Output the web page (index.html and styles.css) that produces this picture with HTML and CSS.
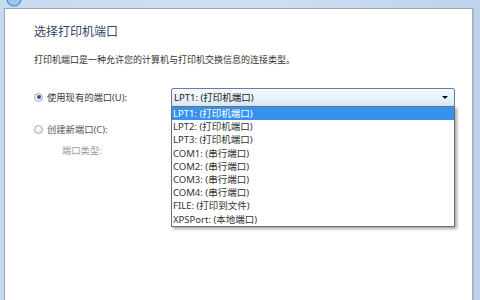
FILE: index.html
```html
<!DOCTYPE html>
<html lang="zh-CN">
<head>
<meta charset="utf-8">
<title>选择打印机端口</title>
<link rel="stylesheet" href="styles.css">
</head>
<body>
<div class="frame">
  <svg class="back-btn" width="20" height="12" viewBox="0 0 20 12">
    <circle cx="10" cy="2" r="7" fill="#9cc8ea" stroke="#4f86bf" stroke-width="1.2"/>
  </svg>
  <div class="client">
    <h1 class="title">选择打印机端口</h1>
    <p class="desc">打印机端口是一种允许您的计算机与打印机交换信息的连接类型。</p>
    <div class="options">
      <div class="row row-first">
        <span class="radio checked"></span>
        <span class="label">使用现有的端口(U):</span>
        <div class="combo">
          <div class="combo-box">
            <span class="combo-text">LPT1: (打印机端口)</span>
            <span class="combo-arrow"></span>
          </div>
          <ul class="dropdown">
            <li class="item selected">LPT1: (打印机端口)</li>
            <li class="item">LPT2: (打印机端口)</li>
            <li class="item">LPT3: (打印机端口)</li>
            <li class="item">COM1: (串行端口)</li>
            <li class="item">COM2: (串行端口)</li>
            <li class="item">COM3: (串行端口)</li>
            <li class="item">COM4: (串行端口)</li>
            <li class="item">FILE: (打印到文件)</li>
            <li class="item">XPSPort: (本地端口)</li>
          </ul>
        </div>
      </div>
      <div class="row row-second">
        <span class="radio"></span>
        <span class="label label-second">创建新端口(C):</span>
      </div>
      <div class="row row-third">
        <span class="label disabled">端口类型:</span>
      </div>
    </div>
  </div>
</div>
</body>
</html>
```
FILE: styles.css
```css
* { box-sizing: border-box; }
html, body { margin: 0; padding: 0; }
body {
  width: 480px;
  height: 300px;
  overflow: hidden;
  font-family: "Noto Sans", "Noto Sans CJK SC", sans-serif;
  font-size: 9px;
  color: #333;
}
.frame {
  position: relative;
  height: 300px;
  background: linear-gradient(90deg, #c6daef 0%, #cfe0f2 50%, #bdd3eb 100%);
  padding: 8px 6px 0 4px;
  display: flex;
}
.back-btn {
  position: absolute;
  left: 4px;
  top: -3px;
}
.client {
  flex: 1;
  background: #fff;
  border: 1px solid #98a6b6;
  border-right: 2px solid #a8b4c2;
  border-bottom: none;
  padding: 15px 0 0 29px;
}
.title {
  margin: 0;
  font-size: 12px;
  line-height: 16px;
  font-weight: normal;
  color: #34466a;
}
.desc {
  margin: 14px 0 0;
  line-height: 12px;
  color: #333;
}
.options { margin-top: 22px; }
.row {
  display: flex;
  align-items: center;
}
.row-first { height: 19px; }
.row-second { height: 14px; margin-top: 16px; }
.row-third { height: 14px; margin-top: 7px; padding-left: 28px; }
.radio {
  width: 9px;
  height: 9px;
  border-radius: 50%;
  border: 1px solid #a3aebb;
  background: radial-gradient(circle at 40% 40%, #ffffff 0%, #e6e8eb 70%, #d4d8dd 100%);
  position: relative;
  flex: 0 0 auto;
  margin-top: -1px;
}
.radio.checked::after {
  content: "";
  position: absolute;
  left: 1.5px;
  top: 1.5px;
  width: 4px;
  height: 4px;
  border-radius: 50%;
  background: #355a8e;
}
.label {
  width: 128px;
  padding-left: 4px;
  line-height: 12px;
  flex: 0 0 auto;
  color: #3a3a3a;
  font-size: 9.3px;
}
.label-second { color: #555; }
.label.disabled {
  padding-left: 0;
  color: #9a9a9a;
}
.combo {
  position: relative;
  width: 284px;
  height: 19px;
}
.combo-box {
  height: 19px;
  border: 1px solid #5f7fa8;
  border-radius: 2px;
  background: linear-gradient(#f6f9fd 0%, #eaf2fa 50%, #d9e7f5 100%);
  display: flex;
  align-items: center;
  padding: 0 6px 0 2px;
}
.combo-text {
  flex: 1;
  line-height: 12px;
  color: #222;
  font-size: 9.5px;
}
.combo-arrow {
  width: 0;
  height: 0;
  border-left: 3px solid transparent;
  border-right: 3px solid transparent;
  border-top: 3px solid #111;
}
.dropdown {
  position: absolute;
  left: 0;
  top: 18px;
  width: 284px;
  margin: 0;
  padding: 0;
  list-style: none;
  background: #fff;
  border: 1px solid #707070;
  box-shadow: 2px 2px 3px rgba(0, 0, 0, 0.35);
}
.item {
  height: 13.2px;
  line-height: 13.2px;
  padding-left: 1px;
  color: #333;
  font-size: 9.5px;
  white-space: nowrap;
}
.item.selected {
  background: #3592ee;
  color: #fff;
}
```
